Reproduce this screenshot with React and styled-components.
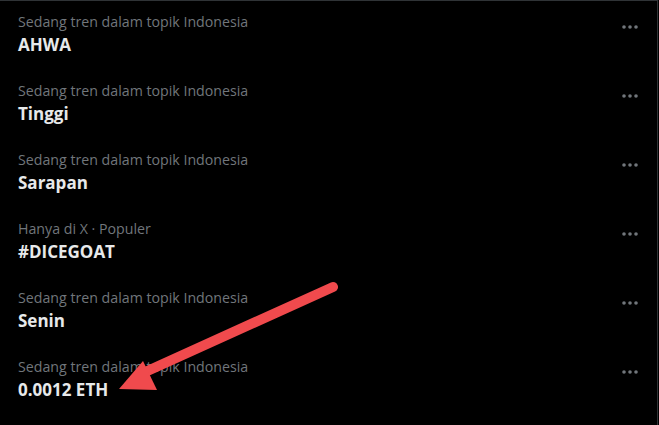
import styled, { createGlobalStyle } from "styled-components";

const GlobalStyle = createGlobalStyle`
  html, body {
    margin: 0;
    padding: 0;
    background: #000;
  }
  body {
    font-family: "Open Sans", "Noto Sans", sans-serif;
    -webkit-font-smoothing: antialiased;
  }
`;

const trends = [
  { context: "Sedang tren dalam topik Indonesia", name: "AHWA" },
  { context: "Sedang tren dalam topik Indonesia", name: "Tinggi" },
  { context: "Sedang tren dalam topik Indonesia", name: "Sarapan" },
  { context: "Hanya di X · Populer", name: "#DICEGOAT" },
  { context: "Sedang tren dalam topik Indonesia", name: "Senin" },
  { context: "Sedang tren dalam topik Indonesia", name: "0.0012 ETH" },
];

const App = () => {
  return (
    <>
      <GlobalStyle />
      <Panel>
        {trends.map((t) => (
          <Row key={t.name}>
            <Text>
              <Context>{t.context}</Context>
              <Name>{t.name}</Name>
            </Text>
            <MoreButton aria-label="Lainnya">
              <svg width="18" height="6" viewBox="0 0 18 6">
                <circle cx="3" cy="3" r="1.8" fill="#71767b" />
                <circle cx="9" cy="3" r="1.8" fill="#71767b" />
                <circle cx="15" cy="3" r="1.8" fill="#71767b" />
              </svg>
            </MoreButton>
          </Row>
        ))}
        {/* annotation arrow drawn over the list */}
        <Arrow width="659" height="425" viewBox="0 0 659 425">
          <line
            x1="333"
            y1="287"
            x2="143"
            y2="373"
            stroke="#f04a4d"
            strokeWidth="10"
            strokeLinecap="round"
          />
          <polygon points="119,389 143,361 157,390" fill="#f04a4d" />
        </Arrow>
      </Panel>
    </>
  );
};

const Panel = styled.div`
  position: relative;
  width: 658px;
  height: 425px;
  border-top: 1px solid #2f3336;
  border-right: 1px solid #2f3336;
  box-sizing: border-box;
  overflow: hidden;
  background: #000;
`;

const Row = styled.div`
  display: flex;
  justify-content: space-between;
  align-items: flex-start;
  height: 69px;
  padding: 13px 17px 0 18px;
  box-sizing: border-box;
`;

const Text = styled.div`
  display: flex;
  flex-direction: column;
  gap: 5px;
`;

const Context = styled.div`
  color: #71767b;
  font-size: 14.2px;
  line-height: 16px;
`;

const Name = styled.div`
  color: #e7e9ea;
  font-size: 17px;
  font-weight: 700;
  line-height: 20px;
`;

const MoreButton = styled.div`
  display: flex;
  align-items: center;
  justify-content: center;
  width: 20px;
  height: 10px;
  margin-top: 8px;
`;

const Arrow = styled.svg`
  position: absolute;
  top: -1px;
  left: 0;
  pointer-events: none;
`;

export default App;
